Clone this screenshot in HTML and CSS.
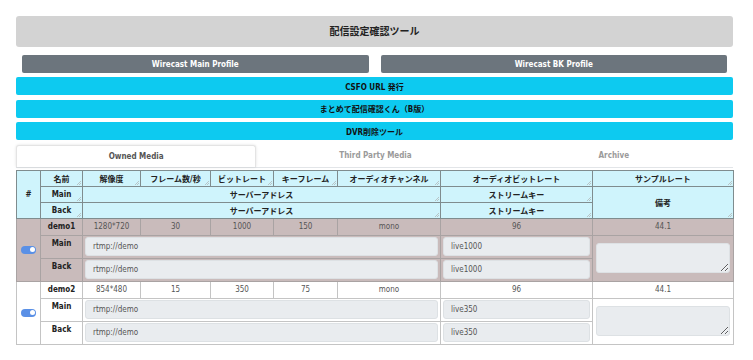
FILE: index.html
```html
<!DOCTYPE html>
<html lang="ja">
<head>
    <meta charset="UTF-8">
    <meta name="viewport" content="width=device-width, initial-scale=1.0">
    <title>配信設定確認ツール</title>
    <link rel="stylesheet" href="styles.css">
</head>
<body>
    <div class="container">
        <div class="title">配信設定確認ツール</div>

        <div class="profiles">
            <button class="btn-gray">Wirecast Main Profile</button>
            <button class="btn-gray">Wirecast BK Profile</button>
        </div>

        <button class="btn-info">CSFO URL 発行</button>
        <button class="btn-info">まとめて配信確認くん（B版）</button>
        <button class="btn-info">DVR削除ツール</button>

        <div class="tabs">
            <div class="tab active">Owned Media</div>
            <div class="tab">Third Party Media</div>
            <div class="tab">Archive</div>
        </div>

        <table class="media">
            <colgroup>
                <col style="width:24px">
                <col style="width:42px">
                <col style="width:58px">
                <col style="width:70px">
                <col style="width:63px">
                <col style="width:64px">
                <col style="width:103px">
                <col style="width:152px">
                <col style="width:141px">
            </colgroup>
            <thead>
                <tr>
                    <th rowspan="3" class="no-grip">#</th>
                    <th>名前</th>
                    <th>解像度</th>
                    <th>フレーム数/秒</th>
                    <th>ビットレート</th>
                    <th>キーフレーム</th>
                    <th>オーディオチャンネル</th>
                    <th>オーディオビットレート</th>
                    <th>サンプルレート</th>
                </tr>
                <tr>
                    <th>Main</th>
                    <th colspan="5">サーバーアドレス</th>
                    <th>ストリームキー</th>
                    <th rowspan="2">備考</th>
                </tr>
                <tr>
                    <th>Back</th>
                    <th colspan="5">サーバーアドレス</th>
                    <th>ストリームキー</th>
                </tr>
            </thead>

            <!-- demo1 -->
            <tbody class="off">
                <tr class="info-row">
                    <td rowspan="3" class="switch-cell"><span class="switch"></span></td>
                    <td class="name">demo1</td>
                    <td>1280*720</td>
                    <td>30</td>
                    <td>1000</td>
                    <td>150</td>
                    <td>mono</td>
                    <td>96</td>
                    <td>44.1</td>
                </tr>
                <tr class="input-row">
                    <td class="label">Main</td>
                    <td colspan="5"><input type="text" value="rtmp://demo"></td>
                    <td><input type="text" value="live1000"></td>
                    <td rowspan="2"><textarea></textarea></td>
                </tr>
                <tr class="input-row">
                    <td class="label">Back</td>
                    <td colspan="5"><input type="text" value="rtmp://demo"></td>
                    <td><input type="text" value="live1000"></td>
                </tr>
            </tbody>

            <!-- demo2 -->
            <tbody>
                <tr class="info-row">
                    <td rowspan="3" class="switch-cell"><span class="switch"></span></td>
                    <td class="name">demo2</td>
                    <td>854*480</td>
                    <td>15</td>
                    <td>350</td>
                    <td>75</td>
                    <td>mono</td>
                    <td>96</td>
                    <td>44.1</td>
                </tr>
                <tr class="input-row">
                    <td class="label">Main</td>
                    <td colspan="5"><input type="text" value="rtmp://demo"></td>
                    <td><input type="text" value="live350"></td>
                    <td rowspan="2"><textarea></textarea></td>
                </tr>
                <tr class="input-row">
                    <td class="label">Back</td>
                    <td colspan="5"><input type="text" value="rtmp://demo"></td>
                    <td><input type="text" value="live350"></td>
                </tr>
            </tbody>
        </table>
    </div>
</body>
</html>
```

FILE: styles.css
```css
body {
    margin: 0;
    font-family: "DejaVu Sans Condensed", "DejaVu Sans", "Noto Sans CJK JP", sans-serif;
    font-size: 8px;
    color: #333;
    background-color: #ffffff;
}

.container {
    width: 717px;
    padding: 16px 0 0 16px;
}

.title {
    background-color: #d3d3d3;
    border-radius: 3px;
    height: 31px;
    line-height: 31px;
    text-align: center;
    font-weight: bold;
    font-size: 10px;
    color: #222;
    margin-bottom: 8px;
}

button {
    font-family: inherit;
    font-weight: bold;
    border: none;
    cursor: pointer;
    display: block;
    width: 100%;
    padding: 0;
}

.profiles {
    display: flex;
    gap: 12px;
    padding: 0 6px;
    margin-bottom: 4px;
}

.btn-gray {
    background-color: #6c757d;
    color: #ffffff;
    height: 18px;
    font-size: 8px;
    border-radius: 2px;
    flex: 1;
}

.btn-info {
    background-color: #0dcaf0;
    color: #111;
    height: 18px;
    font-size: 8px;
    border-radius: 2px;
    margin-bottom: 4.5px;
}

/* Tabs */
.tabs {
    display: flex;
    border-bottom: 1px solid #e2e5e8;
    margin-bottom: 2px;
}

.tab {
    flex: 1;
    height: 22px;
    line-height: 22px;
    text-align: center;
    font-weight: bold;
    color: #9a9a9a;
}

.tab.active {
    background-color: #ffffff;
    color: #555;
    border: 1px solid #e4e4e4;
    border-bottom: none;
    border-radius: 3px 3px 0 0;
    box-shadow: 0 0 3px rgba(0, 0, 0, 0.12);
    height: 21px;
}

/* Table */
.media {
    border-collapse: collapse;
    table-layout: fixed;
    width: 717px;
}

.media th,
.media td {
    padding: 0;
    text-align: center;
    vertical-align: middle;
}

.media th {
    background-color: #cff4fc;
    border: 1px solid #7f8c8e;
    font-weight: bold;
    color: #222;
    height: 15px;
    background-image: linear-gradient(135deg, transparent 55%, #b7c4c6 55%, #b7c4c6 65%, transparent 65%, transparent 78%, #b7c4c6 78%, #b7c4c6 88%, transparent 88%);
    background-repeat: no-repeat;
    background-position: right 1px bottom 1px;
    background-size: 5px 5px;
}

.media th.no-grip {
    background-image: none;
}

.media td {
    border: 1px solid #c4c4c4;
    color: #555;
}

.media tbody.off td {
    background-color: #c9bbbb;
    border-color: #a9a3a3;
}

.info-row td {
    height: 16px;
}

.media td.name,
.media td.label {
    font-weight: bold;
    color: #222;
}

.media td.label {
    vertical-align: top;
    padding-top: 3px;
    height: 19px;
}

.switch {
    display: inline-block;
    width: 15px;
    height: 8px;
    border-radius: 4px;
    background-color: #5a90e6;
    position: relative;
    vertical-align: middle;
}

.switch::after {
    content: "";
    position: absolute;
    right: 1.5px;
    top: 1.5px;
    width: 5px;
    height: 5px;
    border-radius: 50%;
    background-color: #ffffff;
}

.media input,
.media textarea {
    display: block;
    box-sizing: border-box;
    width: calc(100% - 4px);
    margin: 1px 2px;
    background-color: #e9ecef;
    border: 1px solid #dde1e4;
    border-radius: 3px;
    font-family: inherit;
    font-size: 8px;
    color: #555;
    padding: 0 7px;
}

.media input {
    height: 19px;
}

.media textarea {
    height: 30px;
    resize: vertical;
    margin: 1px 3px;
    width: calc(100% - 6px);
}
```
